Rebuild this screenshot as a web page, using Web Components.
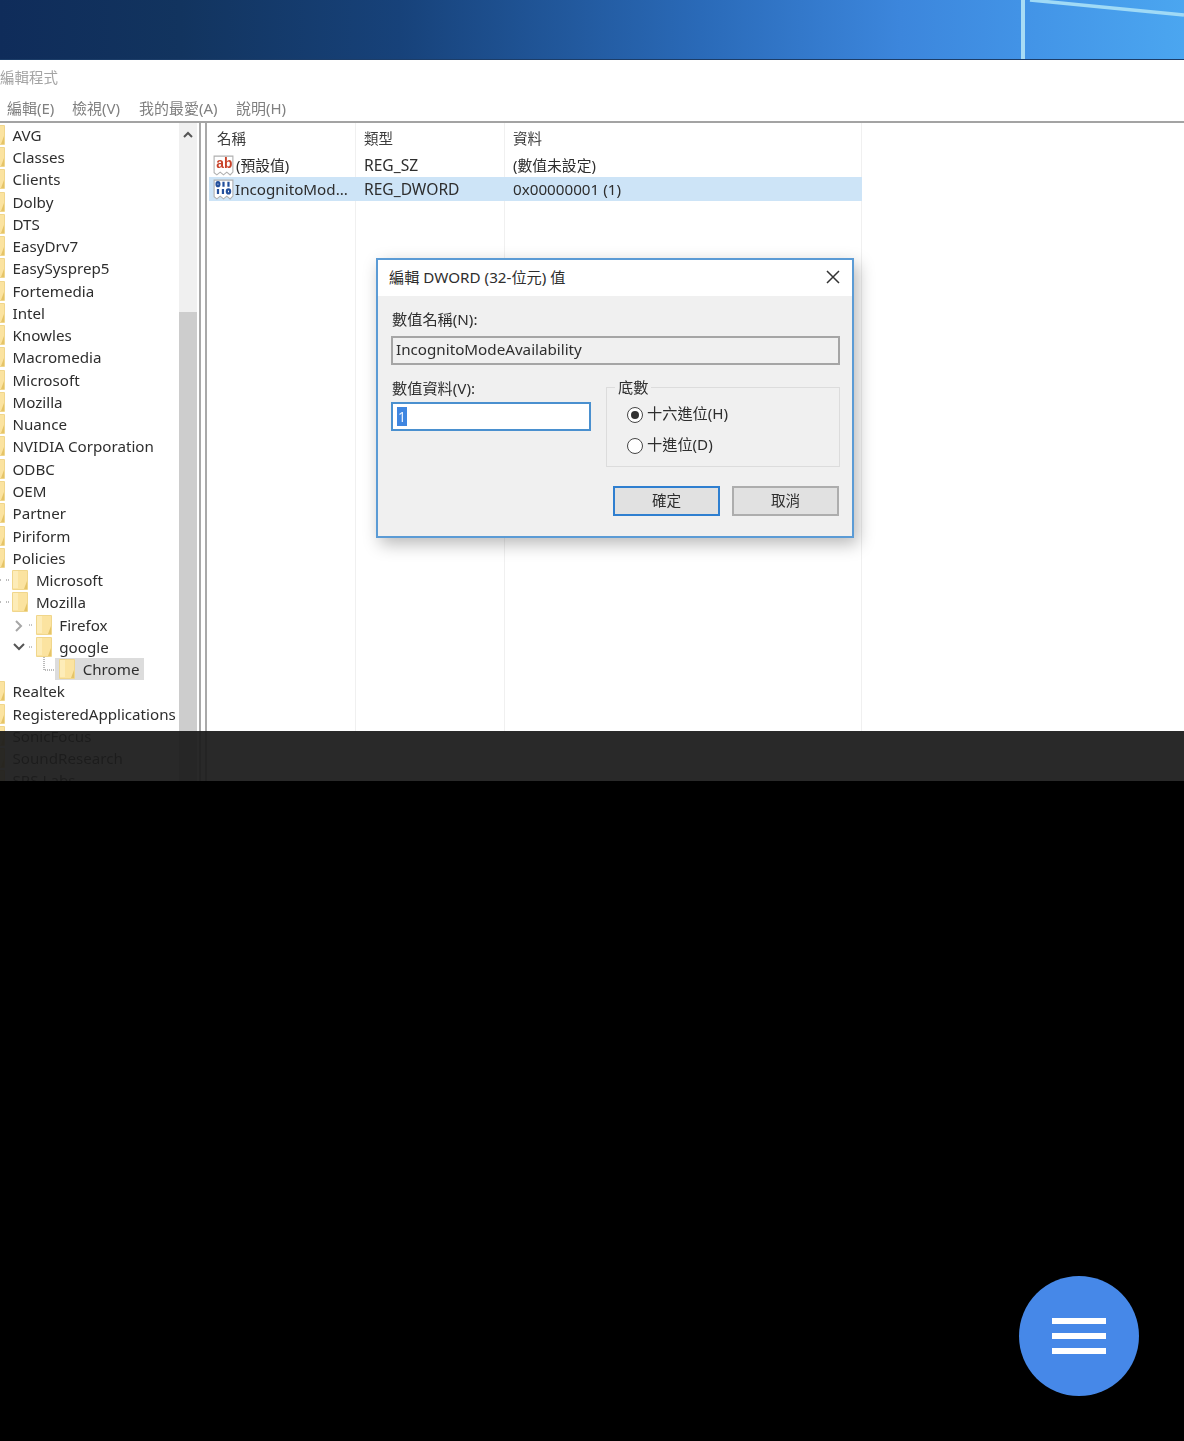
<!DOCTYPE html>
<html lang="zh-Hant">
<head>
<meta charset="utf-8">
<title>編輯程式</title>
<style>
html, body { margin: 0; height: 100%; background: #000; }
body { font-family: "Noto Sans", "Noto Sans CJK TC", sans-serif; }
</style>
</head>
<body>
<video-frame>
  <reg-editor>
    <reg-tree>
      <tree-row label="AVG"></tree-row>
      <tree-row label="Classes"></tree-row>
      <tree-row label="Clients"></tree-row>
      <tree-row label="Dolby"></tree-row>
      <tree-row label="DTS"></tree-row>
      <tree-row label="EasyDrv7"></tree-row>
      <tree-row label="EasySysprep5"></tree-row>
      <tree-row label="Fortemedia"></tree-row>
      <tree-row label="Intel"></tree-row>
      <tree-row label="Knowles"></tree-row>
      <tree-row label="Macromedia"></tree-row>
      <tree-row label="Microsoft"></tree-row>
      <tree-row label="Mozilla"></tree-row>
      <tree-row label="Nuance"></tree-row>
      <tree-row label="NVIDIA Corporation"></tree-row>
      <tree-row label="ODBC"></tree-row>
      <tree-row label="OEM"></tree-row>
      <tree-row label="Partner"></tree-row>
      <tree-row label="Piriform"></tree-row>
      <tree-row label="Policies"></tree-row>
      <tree-row label="Microsoft" level="1"></tree-row>
      <tree-row label="Mozilla" level="1"></tree-row>
      <tree-row label="Firefox" level="2" twisty="closed"></tree-row>
      <tree-row label="google" level="2" twisty="open"></tree-row>
      <tree-row label="Chrome" level="3" selected></tree-row>
      <tree-row label="Realtek"></tree-row>
      <tree-row label="RegisteredApplications"></tree-row>
      <tree-row label="SonicFocus"></tree-row>
      <tree-row label="SoundResearch"></tree-row>
      <tree-row label="SRS Labs"></tree-row>
    </reg-tree>
    <reg-values></reg-values>
  </reg-editor>
  <dword-dialog slot="dialog"></dword-dialog>
</video-frame>
<menu-fab></menu-fab>

<script>
const cjkFont = `"Noto Sans", "Noto Sans CJK TC", sans-serif`;

class VideoFrame extends HTMLElement {
  constructor() {
    super();
    this.attachShadow({ mode: "open" });
    this.shadowRoot.innerHTML = `
<style>
:host { display: block; position: relative; height: 781px; overflow: hidden; background: #fff; font-family: ${cjkFont}; }
.wallpaper { position: relative; height: 59px; border-bottom: 1px solid #1c3d68; overflow: hidden;
  background: linear-gradient(90deg, #0f2c5a 0, #12345f 180px, #17427a 400px, #2a6ab8 700px, #3c86dc 900px, #4293e6 1020px, #4ba6f0 1184px); }
.wallpaper svg { position: absolute; inset: 0; filter: blur(.7px); }
.shade { position: absolute; left: 0; right: 0; top: 731px; bottom: 0; background: rgba(28,28,28,.94); }
</style>
<div class="wallpaper">
  <svg width="1184" height="59" viewBox="0 0 1184 59" fill="none">
    <path d="M1023 0V59" stroke="#a8dcf5" stroke-width="4"/>
    <path d="M1030 0L1184 15" stroke="#a0daf6" stroke-width="3.5"/>
  </svg>
</div>
<slot></slot>
<slot name="dialog"></slot>
<div class="shade"></div>`;
  }
}

class RegEditor extends HTMLElement {
  constructor() {
    super();
    this.attachShadow({ mode: "open" });
    this.shadowRoot.innerHTML = `
<style>
:host { display: block; filter: blur(.4px); }
.title { height: 35px; padding-top: 5px; box-sizing: border-box; font-size: 14.5px; line-height: 24px; color: #a4a4a4; }
.menu { display: flex; height: 28px; padding-left: 7px; box-sizing: border-box; font-size: 15px; line-height: 26px; color: #808080; border-bottom: 2px solid #a3a3a3; }
.menu span:nth-child(1) { width: 65px; }
.menu span:nth-child(2) { width: 67px; }
.menu span:nth-child(3) { width: 97px; }
.panes { display: flex; height: 660px; }
</style>
<div class="title">編輯程式</div>
<div class="menu"><span>編輯(E)</span><span>檢視(V)</span><span>我的最愛(A)</span><span>說明(H)</span></div>
<div class="panes"><slot></slot></div>`;
  }
}

class RegTree extends HTMLElement {
  constructor() {
    super();
    this.attachShadow({ mode: "open" });
    this.shadowRoot.innerHTML = `
<style>
:host { display: flex; flex: none; width: 199px; height: 660px; overflow: hidden; border-right: 2px solid #a9a9a9; }
.rows { width: 179px; flex: none; overflow: hidden; padding-top: .6px; }
.bar { width: 18px; flex: none; display: flex; flex-direction: column; background: #f0f0f0; }
.up { height: 24px; display: flex; align-items: center; justify-content: center; }
.gap { height: 165px; }
.thumb { flex: 1; background: #cdcdcd; }
</style>
<div class="rows"><slot></slot></div>
<div class="bar">
  <div class="up"><svg width="12" height="10" viewBox="0 0 12 10" fill="none"><path d="M2 7L6 3L10 7" stroke="#555" stroke-width="2"/></svg></div>
  <div class="gap"></div>
  <div class="thumb"></div>
</div>`;
  }
}

const folderSvg = `<svg width="16" height="20" viewBox="0 0 16 20"><path d="M0.5 0.5H15.5V19.5H0.5Z" fill="#fbe3a0" stroke="#f0d68c"/><path d="M12 19L15 11V19Z" fill="#e5c468"/><path d="M1 1H6V18H1Z" fill="#fdecb8"/></svg>`;

class TreeRow extends HTMLElement {
  constructor() {
    super();
    this.attachShadow({ mode: "open" });
    this.shadowRoot.innerHTML = `
<style>
:host { display: flex; height: 22.27px; align-items: center; font-size: 15.15px; color: #2e2e2e; white-space: nowrap; }
.lead { flex: none; height: 22px; }
.lead svg { display: block; overflow: visible; }
.node { display: flex; align-items: center; height: 22px; margin-left: -15px; padding: 0 5px 0 4px; }
:host([selected]) .node { background: #dcdcdc; }
.label { margin-left: 7.5px; line-height: 22px; }
</style>
<div class="lead"></div>
<div class="node">${folderSvg}<span class="label"></span></div>`;
  }

  connectedCallback() {
    const level = Number(this.getAttribute("level") || 0);
    const lead = this.shadowRoot.querySelector(".lead");
    const width = level * 23.4;
    lead.style.width = width + "px";
    this.shadowRoot.querySelector(".label").textContent = this.getAttribute("label");

    // つなぎの点線と開閉の矢印
    const twisty = this.getAttribute("twisty");
    let marks = "";
    if (level === 1) marks = `<path d="M0 11H1M6 11H9" stroke="#777" stroke-dasharray="1 1"/>`;
    if (level === 2) marks = `<path d="M29 11H33" stroke="#888" stroke-dasharray="1 1"/>`;
    if (level === 3) marks = `<path d="M44 -1V12H56" stroke="#777" stroke-dasharray="1 1"/>`;
    if (twisty === "closed") marks += `<path d="M16 7L21 12L16 17" fill="none" stroke="#a6a6a6" stroke-width="2"/>`;
    if (twisty === "open") marks += `<path d="M14 8L19 13L24 8" fill="none" stroke="#555" stroke-width="2"/>`;
    if (marks) lead.innerHTML = `<svg width="${width}" height="22" fill="none">${marks}</svg>`;
  }
}

const pageIcon = `<path d="M1 1H18V15.5L15.5 18L12.5 15.5L9.5 18L6.5 15.5L3.5 18L1 16Z" fill="#fff" stroke="#b0b0b0"/>`;

class RegValues extends HTMLElement {
  constructor() {
    super();
    this.attachShadow({ mode: "open" });
    this.shadowRoot.innerHTML = `
<style>
:host { display: block; flex: 1; margin-left: 4px; height: 660px; border-left: 2px solid #a9a9a9; font-size: 14.8px; color: #2e2e2e; }
.table { display: grid; grid-template-columns: 147px 149px 357px; width: 653px; margin-left: 2px; height: 100%; grid-template-rows: 30px 24px 24px 1fr; }
.cell { display: flex; align-items: center; padding-left: 8px; white-space: nowrap; line-height: 24px; }
.head { color: #3c3c3c; font-size: 14.5px; }
.first { padding-left: 4px; gap: 2px; }
.latin { font-size: 15.6px; }
.wide { font-size: 15.2px; }
.sel { background: #cde4f7; }
.line { border-right: 1px solid #f0f0f0; box-sizing: border-box; }
svg { flex: none; }
</style>
<div class="table">
  <div class="cell head line">名稱</div><div class="cell head line">類型</div><div class="cell head line">資料</div>
  <div class="cell first line">
    <svg width="21" height="21" viewBox="0 0 19 19">${pageIcon}<text x="3" y="12" font-family="Liberation Sans" font-weight="700" font-size="12.5" fill="#c9432a">ab</text></svg>
    <span>(預設值)</span>
  </div>
  <div class="cell line latin">REG_SZ</div><div class="cell line">(數值未設定)</div>
  <div class="cell first sel">
    <svg width="21" height="21" viewBox="0 0 19 19">${pageIcon}<g fill="none" stroke="#24509c" stroke-width="2"><ellipse cx="4.5" cy="4.7" rx="1.3" ry="1.8"/><path d="M9.5 2.5V7M14 2.5V7"/><path d="M4.5 9V13.5M9 9V13.5"/><ellipse cx="14" cy="11.2" rx="1.5" ry="1.8"/></g></svg>
    <span class="wide" style="margin-left:-1px">IncognitoMod...</span>
  </div>
  <div class="cell sel latin">REG_DWORD</div><div class="cell sel wide">0x00000001 (1)</div>
  <div class="line"></div><div class="line"></div><div class="line"></div>
</div>`;
  }
}

class DwordDialog extends HTMLElement {
  constructor() {
    super();
    this.attachShadow({ mode: "open" });
    this.shadowRoot.innerHTML = `
<style>
:host { position: absolute; left: 376px; top: 258px; width: 478px; height: 280px; box-sizing: border-box; display: flex; flex-direction: column;
  border: 2px solid #5b9bd5; background: #f0f0f0; box-shadow: 4px 6px 16px rgba(0,0,0,.28); font-size: 15.2px; color: #2e2e2e; filter: blur(.4px); }
.bar { flex: none; height: 36px; box-sizing: border-box; padding: 0 12px 0 11px; background: #fff; display: flex; align-items: center; justify-content: space-between; }
.bar span { line-height: 32px; height: 34px; }
.bar svg { margin-bottom: 2px; }
.body { flex: 1; padding: 12px 12px 0 13px; }
.label { line-height: 22px; height: 22px; padding-left: 1px; }
.name { height: 29px; margin: 6px 0 12px; box-sizing: border-box; border: 2px solid #a5a5a5; line-height: 22px; padding-left: 3px; }
.row { display: flex; gap: 15px; }
.left { width: 200px; }
.value { height: 29px; margin-top: 3px; box-sizing: border-box; border: 2px solid #4a90cf; background: #fff; padding: 3px; }
.value span { display: block; width: 10px; height: 19px; line-height: 19px; margin-left: 1px; padding-left: 1px; box-sizing: border-box; background: #3f86e0; color: #e8f1ff; font-size: 14px; }
.group { position: relative; box-sizing: border-box; width: 234px; height: 80px; border: 1px solid #dcdcdc; margin-top: 10px; display: flex; flex-direction: column; gap: 11px; padding: 17px 0 0 20px; }
.legend { position: absolute; left: 8px; top: -11px; padding: 0 3px; background: #f0f0f0; line-height: 20px; }
.radio { display: flex; align-items: center; gap: 4px; height: 20px; line-height: 16px; }
.radio b { font-weight: 400; display: block; height: 20px; }
.dot { width: 16px; height: 16px; border: 1.5px solid #444; border-radius: 50%; box-sizing: border-box; background: #fff; display: flex; align-items: center; justify-content: center; }
.dot i { width: 8px; height: 8px; border-radius: 50%; background: #333; }
.buttons { display: flex; justify-content: flex-end; gap: 12px; margin-top: 19px; margin-right: 1px; }
.btn { width: 107px; height: 30px; box-sizing: border-box; border: 2px solid #adadad; background: #e1e1e1; text-align: center; line-height: 24px; font-size: 14.6px; }
.btn.main { border-color: #2f7fd0; }
</style>
<div class="bar">
  <span>編輯 DWORD (32-位元) 值</span>
  <svg width="14" height="14" viewBox="0 0 14 14" fill="none"><path d="M1 1L13 13M13 1L1 13" stroke="#333" stroke-width="1.5"/></svg>
</div>
<div class="body">
  <div class="label">數值名稱(N):</div>
  <div class="name">IncognitoModeAvailability</div>
  <div class="row">
    <div class="left">
      <div class="label">數值資料(V):</div>
      <div class="value"><span>1</span></div>
    </div>
    <div class="group">
      <div class="legend">底數</div>
      <div class="radio"><span class="dot"><i></i></span><b>十六進位(H)</b></div>
      <div class="radio"><span class="dot"></span><b>十進位(D)</b></div>
    </div>
  </div>
  <div class="buttons"><div class="btn main">確定</div><div class="btn">取消</div></div>
</div>`;
  }
}

class MenuFab extends HTMLElement {
  constructor() {
    super();
    this.attachShadow({ mode: "open" });
    this.shadowRoot.innerHTML = `
<style>
:host { position: fixed; right: 45px; bottom: 45px; width: 120px; height: 120px; border-radius: 50%; background: #4688e8; display: flex; flex-direction: column; align-items: center; justify-content: center; gap: 9px; }
i { display: block; width: 54px; height: 6px; background: #fff; }
</style>
<i></i><i></i><i></i>`;
  }
}

customElements.define("video-frame", VideoFrame);
customElements.define("reg-editor", RegEditor);
customElements.define("reg-tree", RegTree);
customElements.define("tree-row", TreeRow);
customElements.define("reg-values", RegValues);
customElements.define("dword-dialog", DwordDialog);
customElements.define("menu-fab", MenuFab);
</script>
</body>
</html>
